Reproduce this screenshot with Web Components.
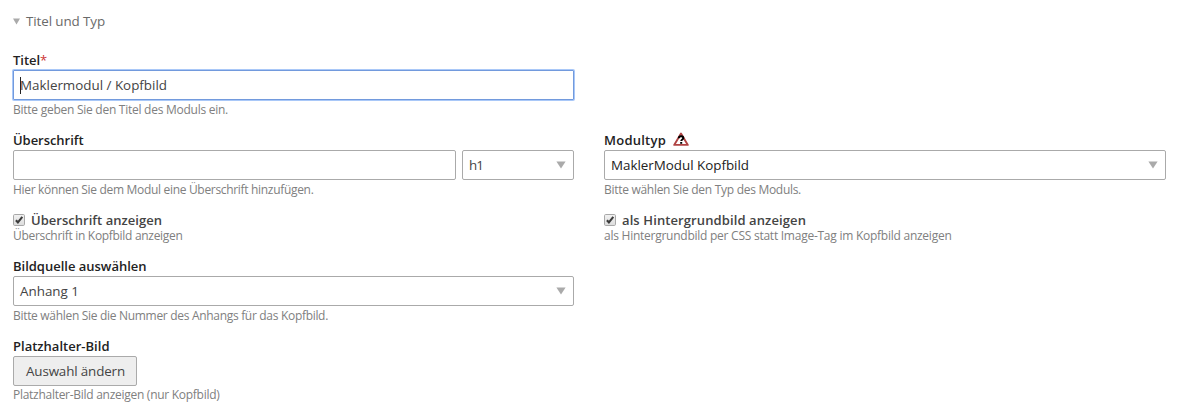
<!DOCTYPE html>
<html lang="de">
<head>
<meta charset="utf-8">
<title>Titel und Typ</title>
<style>
body { margin: 0; background: #fff; font-family: "Open Sans", "Noto Sans", sans-serif; font-size: 13.4px; color: #444; }
</style>
</head>
<body>
<module-form></module-form>
<script>
// Text run tracked so that it fills the width given in "w".
class FitText extends HTMLElement {
  connectedCallback() {
    if (!this.shadowRoot) this.attachShadow({ mode: 'open' }).innerHTML =
      '<style>:host{display:inline-block;white-space:nowrap}</style><slot></slot>';
    const chars = this.textContent.length;
    const natural = this.getBoundingClientRect().width;
    this.style.letterSpacing = ((+this.getAttribute('w') - natural) / chars) + 'px';
  }
}

class FormField extends HTMLElement {
  constructor() {
    super();
    this.attachShadow({ mode: 'open' }).innerHTML = `
      <style>
        :host { display: block; padding-bottom: 10px; }
        .label { display: flex; align-items: center; height: 20px; font-size: 13px; font-weight: 600; color: #222; }
        .control { display: flex; gap: 6px; height: 30px; }
        .help { height: 20px; line-height: 20px; font-size: 12px; color: #808080; }
        :host([compact]) { padding-bottom: 12px; }
        :host([compact]) .control { display: none; }
        :host([compact]) .label { color: #444; }
        :host([compact]) .help { height: 16px; line-height: 16px; margin-top: -2px; }
        :host([tight]) .help { height: 18px; line-height: 18px; }
      </style>
      <div class="label"><slot name="label"></slot></div>
      <div class="control"><slot></slot></div>
      <div class="help"><slot name="help"></slot></div>`;
  }
}

class TextBox extends HTMLElement {
  constructor() {
    super();
    this.attachShadow({ mode: 'open' }).innerHTML = `
      <style>
        :host { display: flex; align-items: center; flex: 1; box-sizing: border-box; height: 30px; padding: 0 6px; border: 1px solid #aaa; border-radius: 2px; background: #fff; }
        :host([focused]) { border-color: #729add; border-radius: 1px; box-shadow: 0 0 0 1px #a9c8f8; }
        .caret { display: none; width: 1px; height: 17px; background: #222; margin-right: -1px; }
        :host([focused]) .caret { display: block; }
      </style>
      <span class="caret"></span><slot></slot>`;
  }
}

class SelectBox extends HTMLElement {
  constructor() {
    super();
    this.attachShadow({ mode: 'open' }).innerHTML = `
      <style>
        :host { display: flex; align-items: center; justify-content: space-between; flex: 1; box-sizing: border-box; height: 30px; padding: 0 7px 0 6px; border: 1px solid #aaa; border-radius: 2px; background: #fff; }
        :host([narrow]) { flex: 0 0 112px; }
        svg { display: block; }
      </style>
      <slot></slot><svg width="10" height="8" viewBox="0 0 10 8"><path d="M.4.5h9.2L5 7.4z" fill="#aaa"/></svg>`;
  }
}

class CheckBox extends HTMLElement {
  constructor() {
    super();
    this.attachShadow({ mode: 'open' }).innerHTML = `
      <style>:host { display: flex; align-items: center; gap: 6px; } svg { display: block; }</style>
      <svg width="12" height="12" viewBox="0 0 12 12">
        <defs><linearGradient id="g" x2="0" y2="1"><stop stop-color="#f2f2f2"/><stop offset="1" stop-color="#dcdcdc"/></linearGradient></defs>
        <rect x=".5" y=".5" width="11" height="11" rx="1.2" fill="url(#g)" stroke="#a8a8a8"/>
        <path d="M2.9 6.2 4.9 8.3 9.3 2.9" fill="none" stroke="#3c3c3c" stroke-width="2.1"/>
      </svg><slot></slot>`;
  }
}

class PushButton extends HTMLElement {
  constructor() {
    super();
    this.attachShadow({ mode: 'open' }).innerHTML = `
      <style>:host { display: flex; align-items: center; box-sizing: border-box; width: 124px; height: 30px; padding-left: 12px; border: 1px solid #aaa; border-radius: 2px; background: #eee; }</style><slot></slot>`;
  }
}

class HelpIcon extends HTMLElement {
  constructor() {
    super();
    this.attachShadow({ mode: 'open' }).innerHTML = `
      <style>:host { display: block; margin: -2px 0 0 7px; } svg { display: block; }</style>
      <svg width="16" height="14" viewBox="0 0 16 14">
        <path d="M8 1.5 14.8 12.9H1.2z" fill="#fff" stroke="#b04444" stroke-width="1.9" stroke-linejoin="round"/>
        <path d="M5.8 6.2C5.9 4.7 6.9 4.2 8.1 4.2c1.3 0 2.2.7 2.2 1.8 0 1.5-2.1 1.5-2.1 3.1" fill="none" stroke="#000" stroke-width="1.9"/>
        <rect x="7.2" y="10" width="2" height="1.8" fill="#000"/>
      </svg>`;
  }
}

class ModuleForm extends HTMLElement {
  constructor() {
    super();
    this.attachShadow({ mode: 'open' }).innerHTML = `
      <style>
        :host { display: block; padding: 11px 13px 0; }
        header { display: flex; align-items: center; gap: 6px; height: 20px; margin-bottom: 19px; color: #6a6a6a; }
        header svg { display: block; }
        main { display: grid; grid-template-columns: 561px 562px; column-gap: 30px; }
        .first { grid-column: 1; }
        .star { color: #c33; font-weight: 400; }
      </style>
      <header><svg width="7" height="7" viewBox="0 0 7 7"><path d="M0 .5h7L3.5 6.5z" fill="#aaa"/></svg><fit-text w="79">Titel und Typ</fit-text></header>
      <main>
        <form-field class="first">
          <fit-text slot="label" w="27">Titel</fit-text><fit-text slot="label" class="star" w="6">*</fit-text>
          <text-box focused><fit-text w="147">Maklermodul / Kopfbild</fit-text></text-box>
          <fit-text slot="help" w="215">Bitte geben Sie den Titel des Moduls ein.</fit-text>
        </form-field>
        <form-field class="first">
          <fit-text slot="label" w="70.5">Überschrift</fit-text>
          <text-box></text-box><select-box narrow><fit-text w="14">h1</fit-text></select-box>
          <fit-text slot="help" w="300.5">Hier können Sie dem Modul eine Überschrift hinzufügen.</fit-text>
        </form-field>
        <form-field>
          <fit-text slot="label" w="62">Modultyp</fit-text><help-icon slot="label"></help-icon>
          <select-box><fit-text w="138" style="color:#222">MaklerModul Kopfbild</fit-text></select-box>
          <fit-text slot="help" w="197">Bitte wählen Sie den Typ des Moduls.</fit-text>
        </form-field>
        <form-field compact>
          <check-box slot="label"><fit-text w="131">Überschrift anzeigen</fit-text></check-box>
          <fit-text slot="help" w="169.5">Überschrift in Kopfbild anzeigen</fit-text>
        </form-field>
        <form-field compact>
          <check-box slot="label"><fit-text w="184">als Hintergrundbild anzeigen</fit-text></check-box>
          <fit-text slot="help" w="347.5">als Hintergrundbild per CSS statt Image-Tag im Kopfbild anzeigen</fit-text>
        </form-field>
        <form-field class="first">
          <fit-text slot="label" w="133.5">Bildquelle auswählen</fit-text>
          <select-box><fit-text w="59">Anhang 1</fit-text></select-box>
          <fit-text slot="help" w="315">Bitte wählen Sie die Nummer des Anhangs für das Kopfbild.</fit-text>
        </form-field>
        <form-field class="first" tight>
          <fit-text slot="label" w="96.5">Platzhalter-Bild</fit-text>
          <push-button><fit-text w="99">Auswahl ändern</fit-text></push-button>
          <fit-text slot="help" w="206.5">Platzhalter-Bild anzeigen (nur Kopfbild)</fit-text>
        </form-field>
      </main>`;
  }
}

customElements.define('form-field', FormField);
customElements.define('text-box', TextBox);
customElements.define('select-box', SelectBox);
customElements.define('check-box', CheckBox);
customElements.define('push-button', PushButton);
customElements.define('help-icon', HelpIcon);
customElements.define('module-form', ModuleForm);
customElements.define('fit-text', FitText);
</script>
</body>
</html>
